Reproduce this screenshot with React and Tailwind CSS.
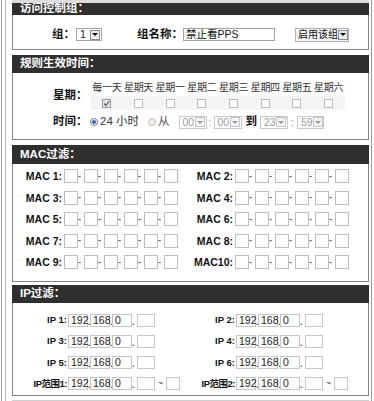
import React from 'react';

const Arrow = ({ dim }) => (
  <span className={`w-[10px] h-[10px] border ${dim ? 'border-[#c4c4c4] bg-[#f3f3f3]' : 'border-[#8f8f8f] bg-[#ececec]'} flex items-center justify-center shrink-0`}>
    <span className={`w-0 h-0 border-l-[3px] border-r-[3px] border-t-[3px] border-x-transparent ${dim ? 'border-t-[#9a9a9a]' : 'border-t-black'}`} />
  </span>
);

const Select = ({ value, w, dim }) => (
  <span className={`${w} h-[13px] border ${dim ? 'border-[#c8c8c8] text-[#9a9a9a]' : 'border-[#a3a3a3] text-[#222]'} bg-white flex items-center justify-between pl-[3px] pr-[1px] text-[10.5px] font-normal leading-none shrink-0`}>
    <span>{value}</span>
    <Arrow dim={dim} />
  </span>
);

const Panel = ({ title, headerCls, bodyCls, children }) => (
  <div>
    <div className={`bg-[#2f2f2f] text-white font-bold text-[11.5px] flex pl-[8px] overflow-hidden ${headerCls}`}>{title}</div>
    <div className={`border border-t-0 border-[#858585] bg-white ${bodyCls}`}>{children}</div>
  </div>
);

const Check = ({ on }) => (
  <span className={`w-[9px] h-[9px] border ${on ? 'border-[#9a9a9a] bg-[#e6e6e6]' : 'border-[#bcbcbc] bg-white'} flex items-center justify-center`}>
    {on && (
      <svg width="7" height="7" viewBox="0 0 7 7">
        <path d="M1 3.5 L3 5.5 L6.2 1" stroke="#4a5a78" strokeWidth="1.2" fill="none" />
      </svg>
    )}
  </span>
);

const Radio = ({ on }) => (
  <span className={`w-[8px] h-[8px] rounded-full border ${on ? 'border-[#7a7a7a] bg-white' : 'border-[#bdbdbd] bg-[#eeeeee]'} flex items-center justify-center shrink-0`}>
    {on && <span className="w-[4px] h-[4px] rounded-full bg-[#2f63c4]" />}
  </span>
);

const MacInputs = () => (
  <div className="flex items-center">
    {[0, 1, 2, 3, 4, 5].map((i) => (
      <React.Fragment key={i}>
        {i > 0 && <span className="w-[6px] text-[9px] leading-none text-[#666] text-left">-</span>}
        <span className="w-[14px] h-[14px] border border-[#bdbdbd] bg-white" />
      </React.Fragment>
    ))}
  </div>
);

const IpInputs = ({ range }) => {
  const vals = ['192', '168', '0', ''];
  return (
    <div className="flex items-center">
      {vals.map((v, i) => (
        <React.Fragment key={i}>
          {i > 0 && <span className={`${i === 3 ? 'w-[5px]' : 'w-[2px]'} text-[9px] leading-none text-[#555] self-end`}>.</span>}
          <span className={`${i === 3 ? 'w-[18px]' : 'w-[20px]'} h-[13px] border border-[#c6c6c6] bg-white text-[10.5px] font-normal leading-[11px] pl-[2px] text-[#222]`}>{v}</span>
        </React.Fragment>
      ))}
      {range && (
        <>
          <span className="w-[11px] text-center text-[9px] font-normal leading-none text-[#444]">~</span>
          <span className="w-[14px] h-[13px] border border-[#c6c6c6] bg-white" />
        </>
      )}
    </div>
  );
};

const days = ['每一天', '星期天', '星期一', '星期二', '星期三', '星期四', '星期五', '星期六'];

export default function App() {
  return (
    <div className="w-[374px] h-[401px] bg-white overflow-hidden flex font-['Liberation_Sans','Noto_Sans_CJK_SC',sans-serif] text-[#111]">
      <div className="w-[1px] ml-[1px] bg-[#a0a0a0]" />
      <div className="w-[1px] ml-[3px] bg-[#bdbdbd]" />
      <div className="w-[357px] ml-[6px] flex flex-col">
        <Panel title="访问控制组：" headerCls="h-[15px] items-end leading-[13px] border-t-[3px] border-[#dcdcdc] bg-clip-padding" bodyCls="h-[35px] pt-[13px]">
          <div className="flex items-center h-[13px] pl-[39px] text-[11.5px] font-bold whitespace-nowrap">
            <span className="w-[24px]">组：</span>
            <Select value="1" w="w-[26px]" />
            <span className="ml-[35px] w-[46px]">组名称：</span>
            <span className="w-[92px] h-[13px] border border-[#a3a3a3] bg-white text-[10.5px] font-normal leading-[11px] pl-[2px]">禁止看PPS</span>
            <span className="ml-[20px] w-[54px] h-[14px] border border-[#b3b3b3] bg-[#f4f4f4] flex items-center justify-between pl-[2px] pr-[1px] text-[10px] font-normal">
              <span>启用该组</span>
              <Arrow />
            </span>
          </div>
        </Panel>

        <Panel title="规则生效时间：" headerCls="h-[18px] mt-[5px] items-center" bodyCls="h-[67px] pt-[8px]">
          <div className="flex pl-[40px]">
            <div className="w-[38px] flex items-center text-[11.5px] font-bold">星期：</div>
            <div>
              <div className="grid grid-cols-[repeat(8,31.7px)] h-[14px] items-center">
                {days.map((d) => (
                  <span key={d} className="text-[10px] leading-none text-center text-[#333] whitespace-nowrap tracking-[-0.3px]">{d}</span>
                ))}
              </div>
              <div className="grid grid-cols-[repeat(8,31.7px)] h-[14px] mt-[1px] items-center bg-[#f4f4f4]">
                {days.map((d, i) => (
                  <span key={d} className="flex justify-center"><Check on={i === 0} /></span>
                ))}
              </div>
            </div>
          </div>
          <div className="flex items-center h-[14px] mt-[5px] pl-[40px] text-[11.5px] whitespace-nowrap">
            <span className="w-[37px] font-bold">时间：</span>
            <Radio on />
            <span className="ml-[2px] text-[#333]">24 小时</span>
            <span className="ml-[9px]"><Radio /></span>
            <span className="ml-[2px] text-[#555]">从</span>
            <span className="ml-[9px]"><Select value="00" w="w-[28px]" dim /></span>
            <span className="w-[7px] text-center text-[#999] text-[10px]">:</span>
            <Select value="00" w="w-[28px]" dim />
            <span className="ml-[4px] font-bold">到</span>
            <span className="ml-[3px]"><Select value="23" w="w-[28px]" dim /></span>
            <span className="w-[9px] text-center text-[#999] text-[10px]">:</span>
            <Select value="59" w="w-[27px]" dim />
          </div>
        </Panel>

        <Panel title="MAC过滤：" headerCls="h-[19px] mt-[5px] items-center" bodyCls="h-[118px] pt-[5px]">
          <div className="grid grid-cols-[51px_126px_45px_auto] gap-y-[7.5px] items-center text-[10.5px] font-bold">
            {[1, 3, 5, 7, 9].map((n) => (
              <React.Fragment key={n}>
                <span className="text-right pr-[2px] leading-[14px] whitespace-nowrap">MAC {n}:</span>
                <MacInputs />
                <span className="text-right pr-[2px] leading-[14px] whitespace-nowrap">{n + 1 === 10 ? 'MAC10:' : `MAC ${n + 1}:`}</span>
                <MacInputs />
              </React.Fragment>
            ))}
          </div>
        </Panel>

        <Panel title="IP过滤：" headerCls="h-[18px] mt-[3px] items-center" bodyCls="h-[93px] pt-[10px]">
          <div className="grid grid-cols-[55px_113px_55px_auto] gap-y-[7px] items-center text-[9.5px] font-bold">
            {[1, 3, 5].map((n) => (
              <React.Fragment key={n}>
                <span className="text-right pr-[1px] whitespace-nowrap">IP {n}:</span>
                <IpInputs />
                <span className="text-right pr-[1px] whitespace-nowrap">IP {n + 1}:</span>
                <IpInputs />
              </React.Fragment>
            ))}
            <span className="text-right pr-[1px] whitespace-nowrap tracking-[-0.5px]">IP范围1:</span>
            <IpInputs range />
            <span className="text-right pr-[1px] whitespace-nowrap tracking-[-0.5px]">IP范围2:</span>
            <IpInputs range />
          </div>
        </Panel>
        <div className="mt-[4px] h-[1px] bg-[#cfcfcf]" />
      </div>
      <div className="w-[1px] ml-[2px] bg-[#9a9a9a]" />
    </div>
  );
}
